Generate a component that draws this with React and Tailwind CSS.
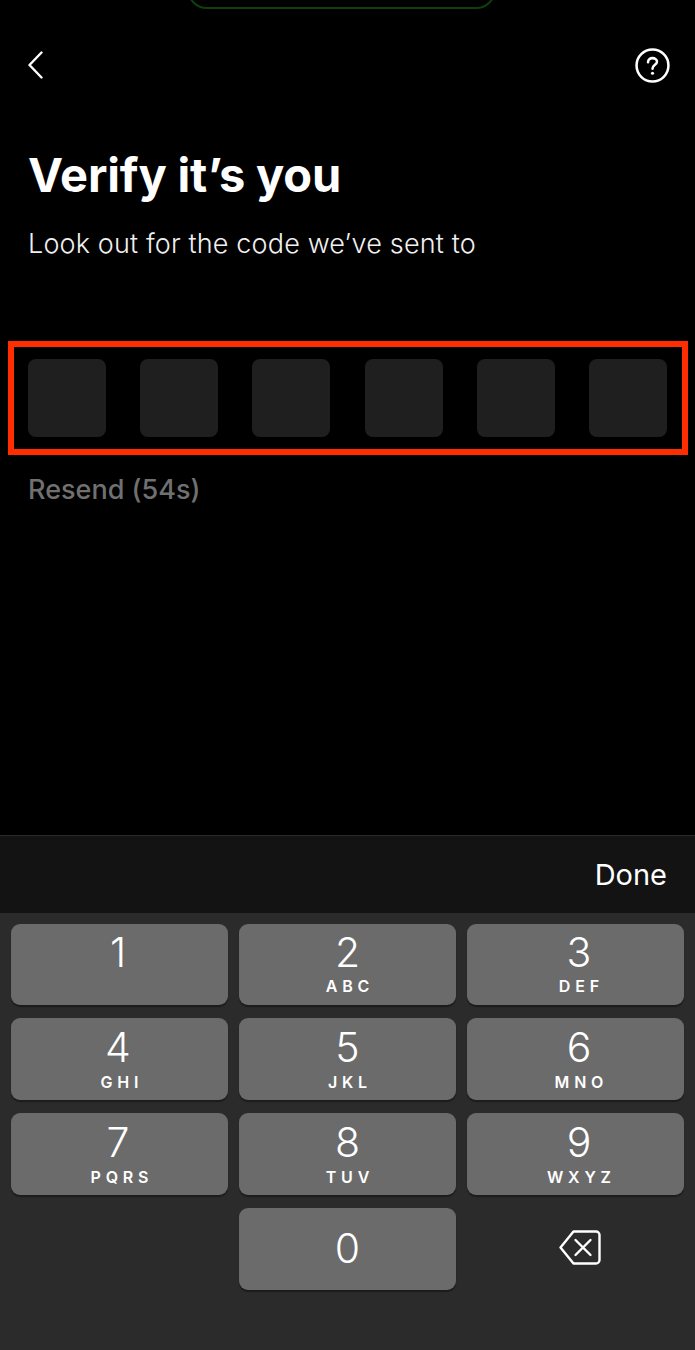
const F = { fontFamily: 'Inter, "Noto Sans", sans-serif' };

const keys = [
  [["1", ""], ["2", "ABC"], ["3", "DEF"]],
  [["4", "GHI"], ["5", "JKL"], ["6", "MNO"]],
  [["7", "PQRS"], ["8", "TUV"], ["9", "WXYZ"]],
];

function Key({ n, l, col, first }) {
  const box = first ? "h-[81px]" : "h-[82px]";
  const shift = col === 2 ? "pl-[7px]" : "";
  const digit = col === 0 ? "pr-[3px]" : "";
  const digitTop = first ? "mt-[4px]" : "mt-[5px]";
  const labelTop = first ? "mt-[1px]" : "mt-[2px]";
  return (
    <div className={`${box} ${shift} rounded-[9px] bg-[#6b6b6b] shadow-[0_2px_1px_#1c1c1c] flex flex-col items-center text-white`}>
      <span className={`text-[41px] leading-[48px] font-light ${digitTop} ${digit}`}>{n}</span>
      <span className={`text-[16px] leading-[18px] font-semibold tracking-[0.3em] pl-[0.3em] ${labelTop}`}>{l}</span>
    </div>
  );
}

export default function App() {
  return (
    <div className="w-[695px] h-[1350px] bg-black flex flex-col overflow-hidden text-white" style={F}>
      <div className="h-[9px] overflow-hidden">
        <div className="ml-[187px] w-[309px] h-[40px] -mt-[31px] border-2 border-[#0d400d] rounded-[28px]" />
      </div>

      <div className="flex items-center justify-between pl-[28px] pr-[25px] mt-[38px] h-[36px]">
        <svg width="16" height="28" viewBox="0 0 16 28" fill="none" stroke="white" strokeWidth="2.4" strokeLinecap="round" strokeLinejoin="round">
          <path d="M13.5 1.5 L1.5 14 L13.5 26.5" />
        </svg>
        <svg width="35" height="35" viewBox="0 0 36 36" fill="none" stroke="white">
          <circle cx="18" cy="18" r="16.4" strokeWidth="2.6" />
          <path d="M13.4 14.6 C13.4 12 15.4 10.4 18 10.4 C20.6 10.4 22.6 12 22.6 14.2 C22.6 17.4 18 17.4 18 21.4" strokeWidth="2.6" strokeLinecap="round" />
          <circle cx="18" cy="26" r="1.6" fill="white" stroke="none" />
        </svg>
      </div>

      <h1 className="pl-[28px] mt-[64px] text-[47px] leading-[56px] font-bold tracking-[-0.15px]">Verify it’s you</h1>
      <p className="pl-[28px] mt-[25px] text-[27px] leading-[32px] font-light tracking-[0.15px] text-[#f0f0f0]">Look out for the code we’ve sent to</p>

      <div className="ml-[8px] mt-[81px] w-[680px] h-[114px] border-[6px] border-[#ff2d00] pl-[14px] pr-[15px] flex items-center justify-between">
        {[0, 1, 2, 3, 4, 5].map((i) => (
          <div key={i} className="w-[78px] h-[78px] rounded-[8px] bg-[#1f1f1f]" />
        ))}
      </div>

      <p className="pl-[28px] mt-[19px] text-[27px] leading-[32px] font-medium text-[#707070]">Resend (54s)</p>

      <div className="flex-1" />

      <div className="h-[78px] bg-[#131313] border-t border-[#2a2a2a] flex items-center justify-end pr-[28px]">
        <span className="text-[29px] font-normal">Done</span>
      </div>

      <div className="h-[437px] bg-[#2b2b2b] px-[11px] pt-[11px] flex flex-col gap-[13px]">
        {keys.map((row, i) => (
          <div key={i} className="grid grid-cols-3 gap-[11px]">
            {row.map(([n, l], c) => <Key key={n} n={n} l={l} col={c} first={i === 0} />)}
          </div>
        ))}
        <div className="grid grid-cols-3 gap-[11px]">
          <div />
          <div className="h-[82px] rounded-[9px] bg-[#6b6b6b] shadow-[0_2px_1px_#1c1c1c] flex items-center justify-center">
            <span className="text-[41px] font-light">0</span>
          </div>
          <div className="h-[82px] pl-[9px] pb-[3px] flex items-center justify-center">
            <svg width="42" height="35" viewBox="0 0 42 35" fill="none" stroke="white" strokeWidth="2.4" strokeLinecap="round" strokeLinejoin="round">
              <path d="M14.5 1.5 H37 A3.5 3.5 0 0 1 40.5 5 V30 A3.5 3.5 0 0 1 37 33.5 H14.5 L1.5 17.5 Z" />
              <path d="M16.5 10 L31.5 25 M31.5 10 L16.5 25" />
            </svg>
          </div>
        </div>
      </div>
    </div>
  );
}
